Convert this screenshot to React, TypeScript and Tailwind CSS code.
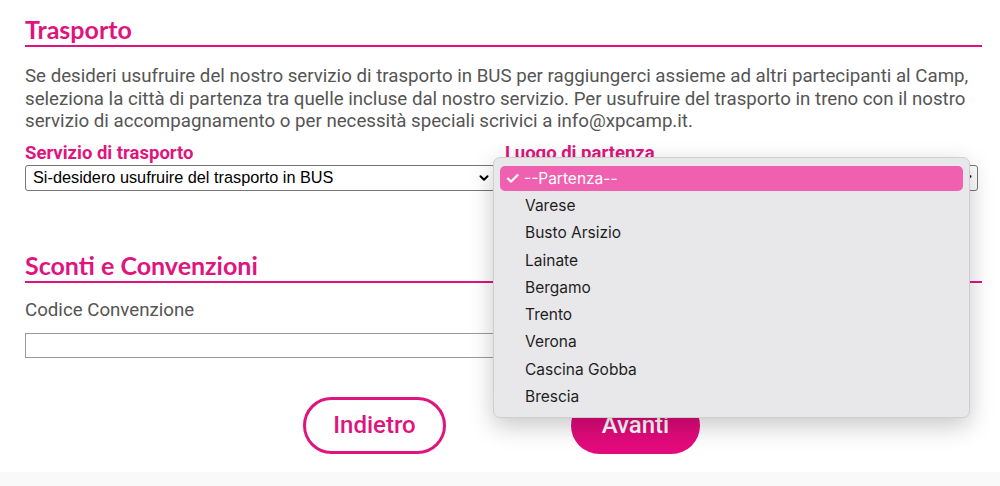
import React from 'react';
import { ChevronDown } from 'lucide-react';

const cities = ['Varese', 'Busto Arsizio', 'Lainate', 'Bergamo', 'Trento', 'Verona', 'Cascina Gobba', 'Brescia'];

const FakeSelect: React.FC<{ value: string }> = ({ value }) => (
  <div className="flex h-[26px] items-center justify-between rounded-[3px] border border-[#767676] bg-white pl-[7px] pr-[3px] font-['Liberation_Sans',sans-serif] text-[16.3px] text-black">
    <span>{value}</span>
    <ChevronDown className="h-[14px] w-[14px]" strokeWidth={3.5} />
  </div>
);

const App: React.FC = () => {
  return (
    <div className="relative h-[486px] w-[1000px] overflow-hidden bg-white font-['Roboto',sans-serif]">
      <div className="px-[25px] pr-[18px] pt-[15px]">
        <h2 className="border-b-2 border-[#e0147e] pb-[1px] font-['Lato',sans-serif] text-[25px] font-bold leading-[29px] text-[#e0147e]">
          Trasporto
        </h2>
        <p className="mt-[18px] text-[18.7px] leading-[22.5px] text-[#555]">
          Se desideri usufruire del nostro servizio di trasporto in BUS per raggiungerci assieme ad altri partecipanti al Camp,
          seleziona la città di partenza tra quelle incluse dal nostro servizio. Per usufruire del trasporto in treno con il nostro
          servizio di accompagnamento o per necessità speciali scrivici a info@xpcamp.it.
        </p>
        <div className="mt-[10px] grid grid-cols-[470px_478px] gap-x-[5px]">
          <div>
            <div className="text-[18.5px] font-bold leading-[20px] text-[#e0147e]">Servizio di trasporto</div>
            <div className="mt-[2px]">
              <FakeSelect value="Si-desidero usufruire del trasporto in BUS" />
            </div>
          </div>
          <div>
            <div className="pl-[5px] text-[18.5px] font-bold leading-[20px] text-[#e0147e]">Luogo di partenza</div>
            <div className="mt-[2px]">
              <FakeSelect value="--Partenza--" />
            </div>
          </div>
        </div>

        <h2 className="mt-[60px] border-b-2 border-[#e0147e] pb-[1px] font-['Lato',sans-serif] text-[25px] font-bold leading-[29px] text-[#e0147e]">
          Sconti e Convenzioni
        </h2>
        <div className="mt-[15px] text-[18.7px] leading-[24px] text-[#555]">Codice Convenzione</div>
        <div className="mt-[11px] h-[25px] w-[470px] border border-[#999] bg-white" />

        <div className="mt-[39px] flex justify-center gap-[125px] pr-[4px]">
          <button className="h-[57px] w-[143px] rounded-full border-[3px] border-[#e0147e] bg-white text-[24px] font-medium text-[#e0147e]">
            Indietro
          </button>
          <button className="h-[57px] w-[129px] rounded-full bg-[#e20a7c] text-[24px] font-medium text-white">
            Avanti
          </button>
        </div>
      </div>
      <div className="absolute bottom-0 left-0 h-[14px] w-full bg-[#f9f9f9]" />

      {/* open dropdown */}
      <div className="absolute left-[493px] top-[157px] w-[477px] rounded-[7px] border border-[#cfcfd2] bg-[#e8e8ea] px-[6px] pb-[7px] pt-[7px] font-['Inter',sans-serif] text-[15.5px] text-[#1e1e1e] shadow-[0_8px_24px_rgba(0,0,0,0.22)]">
        <div className="flex h-[27px] items-center py-[1px]">
          <div className="flex h-full w-full items-center rounded-[5px] bg-[#f060b0] pl-[5px] text-white">
            <span className="w-[19px] text-[17px] font-semibold leading-none">✓</span>
            <span>--Partenza--</span>
          </div>
        </div>
        {cities.map((c) => (
          <div key={c} className="flex h-[27.25px] items-center pl-[25px]">
            {c}
          </div>
        ))}
      </div>
    </div>
  );
};

export default App;
